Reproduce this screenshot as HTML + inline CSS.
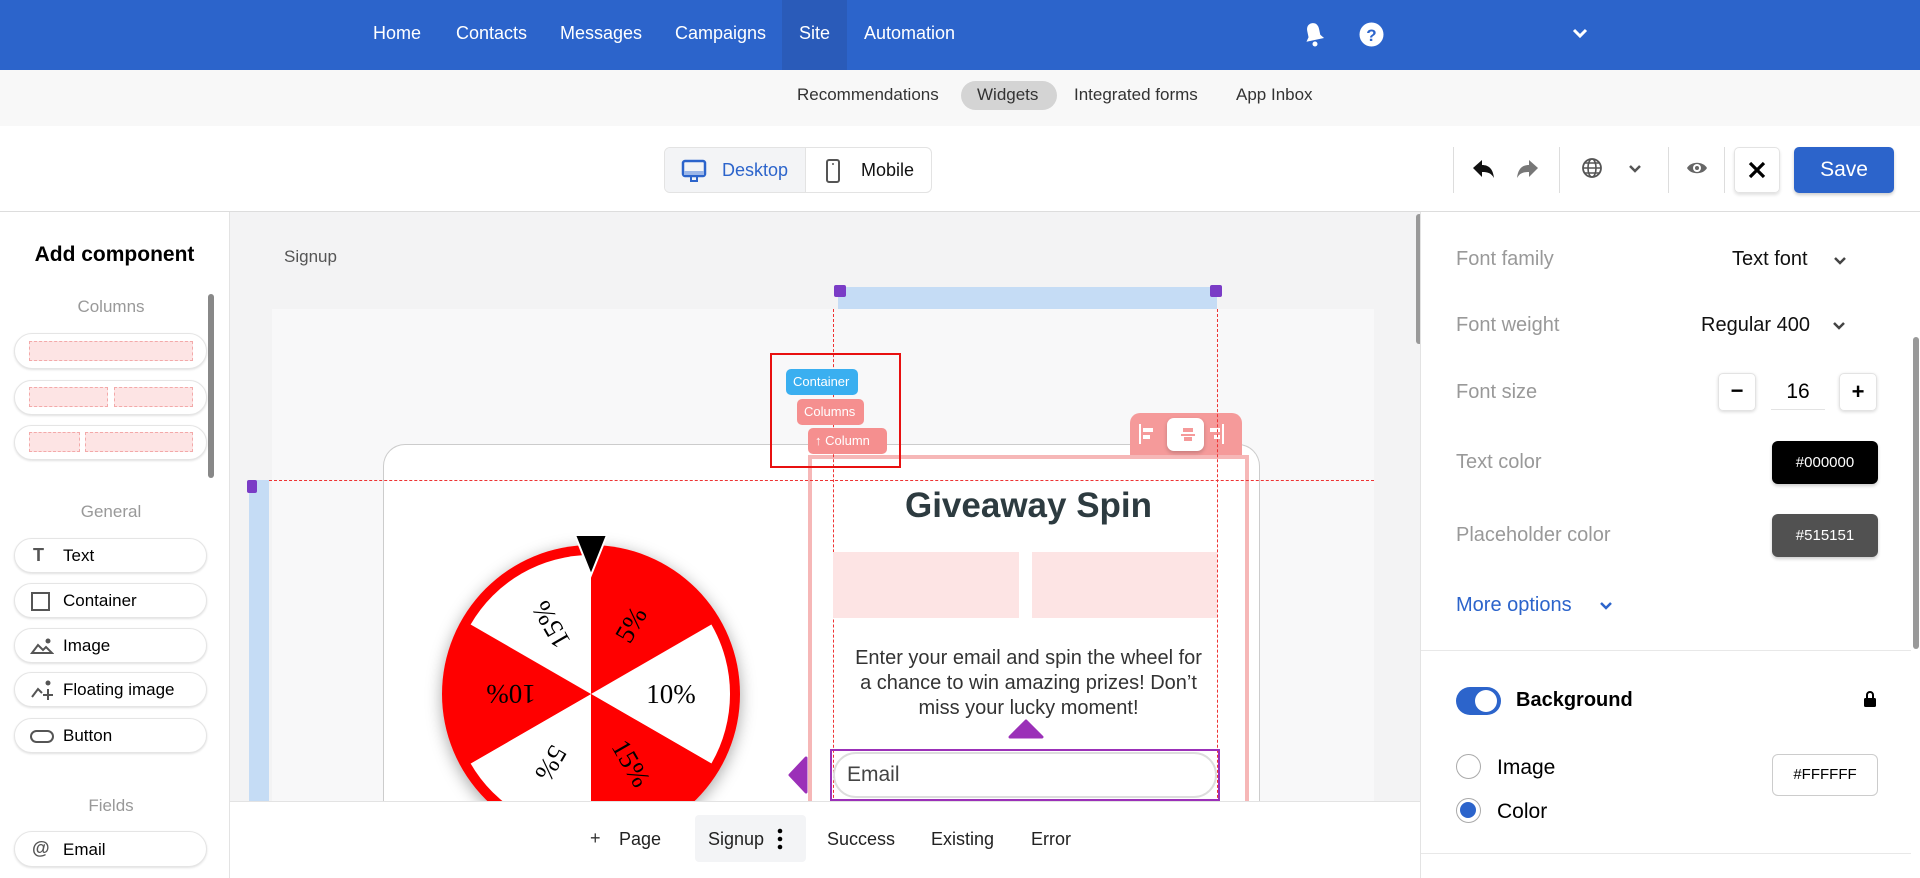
<!DOCTYPE html>
<html style="overflow:hidden;width:1920px;height:878px"><head><meta charset="utf-8"><style>
*{box-sizing:border-box;margin:0;padding:0}
body{width:1920px;height:878px;overflow:hidden;font-family:"Liberation Sans",Arial,sans-serif;background:#fff;position:relative}
.a{position:absolute}
.nav{left:0;top:0;width:1920px;height:70px;background:#2c64cb}
.nav span{position:absolute;top:23px;color:#fff;font-size:18px}
.sub{left:0;top:70px;width:1920px;height:56px;background:#f8f8f8}
.sub span{position:absolute;top:15px;font-size:17px;color:#333}
.pill{border:1px solid #e5e5e5;border-radius:20px;background:#fff;box-shadow:0 1px 2px rgba(0,0,0,.12)}
.lbl{color:#999;font-size:17px}
.rl{position:absolute;left:1456px;color:#999;font-size:20px}
.tag{position:absolute;color:#fff;font-size:13px;border-radius:5px;line-height:26px;padding-left:7px}
</style></head><body>
<div class="a nav">
<div class="a" style="left:782px;top:0;width:65px;height:70px;background:#2a5bb9"></div>
<span style="left:373px">Home</span><span style="left:456px">Contacts</span><span style="left:560px">Messages</span><span style="left:675px">Campaigns</span><span style="left:799px">Site</span><span style="left:864px">Automation</span>
<svg class="a" style="left:1302px;top:21px" width="24" height="26" viewBox="0 0 24 26"><path d="M12 2c-4 0-6 3-6 7v6l-3 4h18l-3-4V9c0-4-2-7-6-7z" fill="#fff" transform="rotate(-12 12 13)"/><circle cx="13" cy="23" r="2.5" fill="#fff"/></svg>
<svg class="a" style="left:1359px;top:22px" width="25" height="25"><circle cx="12.5" cy="12.5" r="12" fill="#fff"/><text x="12.5" y="19" text-anchor="middle" font-size="17" font-weight="bold" fill="#2c64cb" font-family="Liberation Sans">?</text></svg>
<svg class="a" style="left:1572px;top:28px" width="16" height="12"><path d="M2 2l6 6 6-6" stroke="#fff" stroke-width="3" fill="none"/></svg>
</div>
<div class="a sub">
<div class="a" style="left:961px;top:11px;width:96px;height:29px;background:#d4d4d4;border-radius:15px"></div>
<span style="left:797px">Recommendations</span><span style="left:977px">Widgets</span><span style="left:1074px">Integrated forms</span><span style="left:1236px">App Inbox</span>
</div>
<div class="a" style="left:664px;top:147px;width:268px;height:46px;border:1px solid #e3e3e3;border-radius:6px;background:#fff;overflow:hidden">
<div class="a" style="left:0;top:0;width:141px;height:46px;background:#f3f4f6;border-right:1px solid #e3e3e3"></div>
<svg class="a" style="left:16px;top:11px" width="26" height="24"><rect x="2" y="2" width="22" height="15" rx="2" fill="none" stroke="#2c64cb" stroke-width="2.5"/><rect x="3" y="12" width="20" height="4" fill="#9bb6e8"/><path d="M10 18v4h6v-4" fill="none" stroke="#2c64cb" stroke-width="2"/></svg>
<span class="a" style="left:57px;top:12px;font-size:18px;color:#2c64cb">Desktop</span>
<svg class="a" style="left:160px;top:10px" width="16" height="26"><rect x="2" y="2" width="12" height="22" rx="2" fill="none" stroke="#555" stroke-width="2"/><circle cx="8" cy="6" r="1" fill="#555"/></svg>
<span class="a" style="left:196px;top:12px;font-size:18px;color:#111">Mobile</span>
</div>
<div class="a" style="left:1453px;top:147px;width:1px;height:46px;background:#ddd"></div>
<div class="a" style="left:1559px;top:147px;width:1px;height:46px;background:#ddd"></div>
<div class="a" style="left:1668px;top:147px;width:1px;height:46px;background:#ddd"></div>
<div class="a" style="left:1724px;top:147px;width:1px;height:46px;background:#ddd"></div>
<svg class="a" style="left:1470px;top:157px" width="26" height="24"><path d="M3 11l9-8v5c7 0 11 4 12 13-3-5-6-6-12-6v5z" fill="#111"/></svg>
<svg class="a" style="left:1515px;top:157px" width="26" height="24"><path d="M23 11l-9-8v5C7 8 3 12 2 21c3-5 6-6 12-6v5z" fill="#777"/></svg>
<svg class="a" style="left:1581px;top:157px" width="22" height="22"><circle cx="11" cy="11" r="9" fill="none" stroke="#555" stroke-width="1.8"/><ellipse cx="11" cy="11" rx="4" ry="9" fill="none" stroke="#555" stroke-width="1.6"/><path d="M2 11h18M4 6h14M4 16h14" stroke="#555" stroke-width="1.4"/></svg>
<svg class="a" style="left:1628px;top:164px" width="14" height="10"><path d="M2 2l5 5 5-5" stroke="#555" stroke-width="2.5" fill="none"/></svg>
<svg class="a" style="left:1686px;top:160px" width="22" height="16"><path d="M1 8c4-7 16-7 20 0-4 7-16 7-20 0z" fill="#666"/><circle cx="11" cy="8" r="4" fill="#fff"/><circle cx="11" cy="8" r="2" fill="#666"/></svg>
<div class="a" style="left:1734px;top:147px;width:46px;height:46px;border:1px solid #e3e3e3;border-radius:5px;box-shadow:0 2px 3px rgba(0,0,0,.12)"></div>
<svg class="a" style="left:1748px;top:161px" width="18" height="18"><path d="M2 2l14 14M16 2L2 16" stroke="#000" stroke-width="3.2"/></svg>
<div class="a" style="left:1794px;top:147px;width:100px;height:46px;background:#2c64cb;border-radius:5px;color:#fff;font-size:21px;text-align:center;line-height:46px;box-shadow:0 2px 3px rgba(0,0,0,.2)">Save</div>
<div class="a" style="left:0;top:211px;width:1920px;height:1px;background:#ddd"></div>
<div class="a" style="left:229px;top:212px;width:1px;height:666px;background:#e3e3e3"></div>
<div class="a" style="left:0;top:243px;width:229px;text-align:center;font-size:21px;font-weight:bold">Add component</div>
<div class="a lbl" style="left:0;top:297px;width:222px;text-align:center">Columns</div>
<div class="a" style="left:208px;top:294px;width:6px;height:184px;background:#888;border-radius:3px"></div>
<div class="a pill" style="left:14px;top:333px;width:193px;height:36px"><div class="a" style="left:14px;top:7px;width:164px;height:20px;background:#fde4e4;border:1px dashed #f3a9a9"></div></div>
<div class="a pill" style="left:14px;top:380px;width:193px;height:35px"><div class="a" style="left:14px;top:6px;width:79px;height:20px;background:#fde4e4;border:1px dashed #f3a9a9"></div><div class="a" style="left:99px;top:6px;width:79px;height:20px;background:#fde4e4;border:1px dashed #f3a9a9"></div></div>
<div class="a pill" style="left:14px;top:425px;width:193px;height:35px"><div class="a" style="left:14px;top:6px;width:51px;height:20px;background:#fde4e4;border:1px dashed #f3a9a9"></div><div class="a" style="left:70px;top:6px;width:108px;height:20px;background:#fde4e4;border:1px dashed #f3a9a9"></div></div>
<div class="a lbl" style="left:0;top:502px;width:222px;text-align:center">General</div>
<div class="a pill" style="left:14px;top:538px;width:193px;height:35px"><span class="a" style="left:18px;top:6px;font-size:18px;font-weight:bold;color:#555">T</span><span class="a" style="left:48px;top:7px;font-size:17px">Text</span></div>
<div class="a pill" style="left:14px;top:583px;width:193px;height:35px"><div class="a" style="left:16px;top:8px;width:19px;height:19px;border:2px solid #555"></div><span class="a" style="left:48px;top:7px;font-size:17px">Container</span></div>
<div class="a pill" style="left:14px;top:628px;width:193px;height:35px"><svg class="a" style="left:15px;top:8px" width="24" height="18"><path d="M2 16l6-8 5 5 3-3 6 6z" fill="none" stroke="#555" stroke-width="2"/><circle cx="18" cy="4" r="2.5" fill="#555"/></svg><span class="a" style="left:48px;top:7px;font-size:17px">Image</span></div>
<div class="a pill" style="left:14px;top:672px;width:193px;height:35px"><svg class="a" style="left:15px;top:6px" width="26" height="22"><path d="M2 18l6-8 4 4" fill="none" stroke="#555" stroke-width="2"/><circle cx="18" cy="4" r="2.5" fill="#555"/><path d="M18 10v11M13 16h10" stroke="#555" stroke-width="2"/></svg><span class="a" style="left:48px;top:7px;font-size:17px">Floating image</span></div>
<div class="a pill" style="left:14px;top:718px;width:193px;height:35px"><div class="a" style="left:15px;top:11px;width:24px;height:13px;border:2px solid #555;border-radius:7px"></div><span class="a" style="left:48px;top:7px;font-size:17px">Button</span></div>
<div class="a lbl" style="left:0;top:796px;width:222px;text-align:center">Fields</div>
<div class="a pill" style="left:14px;top:831px;width:193px;height:36px"><span class="a" style="left:17px;top:6px;font-size:18px;font-weight:bold;color:#555">@</span><span class="a" style="left:48px;top:8px;font-size:17px">Email</span></div>
<div class="a" style="left:230px;top:212px;width:1190px;height:666px;background:#f3f3f4;overflow:hidden">
<span class="a" style="left:54px;top:35px;font-size:17px;color:#555">Signup</span>
<div class="a" style="left:42px;top:97px;width:1102px;height:569px;background:#f8f8f9"></div>
<div class="a" style="left:153px;top:232px;width:877px;height:434px;background:#fff;border:1px solid #ccc;border-bottom:none;border-radius:22px 22px 0 0"></div>
<svg class="a" style="left:0;top:0" width="1190" height="666">
<defs><filter id="sh" x="-20%" y="-20%" width="140%" height="140%"><feDropShadow dx="0" dy="4" stdDeviation="8" flood-opacity=".35"/></filter></defs>
<g transform="translate(361,482)">
<circle r="149" fill="#f00" filter="url(#sh)"/>
<g><path d="M0 0L0-139A139 139 0 0 1 120.4-69.5Z" fill="#f00"/></g>
<g transform="rotate(60)"><path d="M0 0L0-139A139 139 0 0 1 120.4-69.5Z" fill="#fff"/></g>
<g transform="rotate(120)"><path d="M0 0L0-139A139 139 0 0 1 120.4-69.5Z" fill="#f00"/></g>
<g transform="rotate(180)"><path d="M0 0L0-139A139 139 0 0 1 120.4-69.5Z" fill="#fff"/></g>
<g transform="rotate(240)"><path d="M0 0L0-139A139 139 0 0 1 120.4-69.5Z" fill="#f00"/></g>
<g transform="rotate(300)"><path d="M0 0L0-139A139 139 0 0 1 120.4-69.5Z" fill="#fff"/></g>
<g font-family="Liberation Serif,serif" font-size="27" fill="#000" text-anchor="middle">
<g transform="rotate(30)"><text transform="translate(0,-80) rotate(-90)" y="9">5%</text></g>
<g transform="rotate(90)"><text transform="translate(0,-80) rotate(-90)" y="9">10%</text></g>
<g transform="rotate(150)"><text transform="translate(0,-80) rotate(-90)" y="9">15%</text></g>
<g transform="rotate(210)"><text transform="translate(0,-80) rotate(-90)" y="9">5%</text></g>
<g transform="rotate(270)"><text transform="translate(0,-80) rotate(-90)" y="9">10%</text></g>
<g transform="rotate(330)"><text transform="translate(0,-80) rotate(-90)" y="9">15%</text></g>
</g>
<path d="M-16-159h32l-16 40z" fill="#000" stroke="#fff" stroke-width="2"/>
</g>
</svg>
<div class="a" style="left:578px;top:243px;width:441px;height:423px;border:4px solid #f6b7b7;border-bottom:none"></div>
<div class="a" style="left:900px;top:201px;width:112px;height:42px;background:#f59a9a;border-radius:10px 10px 0 0"></div>
<div class="a" style="left:937px;top:206px;width:37px;height:33px;background:#fff;border-radius:7px;box-shadow:0 2px 4px rgba(0,0,0,.2)"></div>
<svg class="a" style="left:907px;top:211px" width="100" height="24"><g fill="#fff"><rect x="2" y="1" width="2" height="20"/><rect x="6" y="5" width="10" height="4"/><rect x="6" y="12" width="7" height="4"/><rect x="85" y="1" width="2" height="20"/><rect x="73" y="5" width="10" height="4"/><rect x="77" y="12" width="6" height="4"/></g><g fill="#f59a9a"><rect x="44" y="11" width="14" height="2"/><rect x="46" y="5" width="10" height="4"/><rect x="47" y="14" width="8" height="4"/></g></svg>
<div class="a" style="left:608px;top:75px;width:379px;height:22px;background:#c5dcf5"></div>
<div class="a" style="left:604px;top:73px;width:12px;height:12px;background:#7a3cc6;border-radius:2px"></div>
<div class="a" style="left:980px;top:73px;width:12px;height:12px;background:#7a3cc6;border-radius:2px"></div>
<div class="a" style="left:19px;top:268px;width:20px;height:398px;background:#c5dcf5"></div>
<div class="a" style="left:17px;top:268px;width:10px;height:13px;background:#7a3cc6;border-radius:2px"></div>
<div class="a" style="left:603px;top:97px;width:0;height:569px;border-left:1px dashed #e33"></div>
<div class="a" style="left:987px;top:97px;width:0;height:569px;border-left:1px dashed #e33"></div>
<div class="a" style="left:39px;top:268px;width:1105px;height:0;border-top:1px dashed #e33"></div>
<div class="a" style="left:540px;top:141px;width:131px;height:115px;border:2.5px solid #e81010"></div>
<div class="tag" style="left:556px;top:157px;width:72px;background:#3aaff0">Container</div>
<div class="tag" style="left:567px;top:187px;width:67px;background:#f58f8f">Columns</div>
<div class="tag" style="left:578px;top:216px;width:79px;background:#f58f8f">↑ Column</div>
<div class="a" style="left:578px;top:274px;width:441px;text-align:center;font-size:35px;font-weight:bold;color:#2d3b40">Giveaway Spin</div>
<div class="a" style="left:603px;top:340px;width:186px;height:66px;background:#fde4e4"></div>
<div class="a" style="left:802px;top:340px;width:185px;height:66px;background:#fde4e4"></div>
<div class="a" style="left:578px;top:434px;width:441px;text-align:center;font-size:20px;line-height:25px;color:#333;white-space:nowrap">Enter your email and spin the wheel for<br>a chance to win amazing prizes! Don’t<br>miss your lucky moment!</div>
<svg class="a" style="left:778px;top:507px" width="36" height="20"><path d="M2 18L18 2 34 18z" fill="#9b30b8" stroke="#9b30b8" stroke-linejoin="round" stroke-width="3"/></svg>
<div class="a" style="left:600px;top:537px;width:390px;height:52px;border:2px solid #9b30b8"></div>
<div class="a" style="left:603px;top:540px;width:384px;height:46px;border:2px solid #ddd;border-radius:23px;background:#fff"></div>
<span class="a" style="left:617px;top:551px;font-size:21px;color:#444">Email</span>
<svg class="a" style="left:558px;top:544px" width="20" height="38"><path d="M18 2L2 19 18 36z" fill="#9b30b8" stroke="#9b30b8" stroke-linejoin="round" stroke-width="3"/></svg>
<div class="a" style="left:1186px;top:2px;width:6px;height:130px;background:#999;border-radius:3px"></div>
</div>
<div class="a" style="left:230px;top:801px;width:1190px;height:77px;background:#fff;border-top:1px solid #e3e3e3"></div>
<span class="a" style="left:590px;top:828px;font-size:18px;color:#333">+</span>
<span class="a" style="left:619px;top:829px;font-size:18px;color:#222">Page</span>
<div class="a" style="left:695px;top:815px;width:111px;height:47px;background:#f3f4f6;border-radius:4px"></div>
<span class="a" style="left:708px;top:829px;font-size:18px;color:#222">Signup</span>
<svg class="a" style="left:777px;top:828px" width="6" height="22"><circle cx="3" cy="3" r="2.3"/><circle cx="3" cy="11" r="2.3"/><circle cx="3" cy="19" r="2.3"/></svg>
<span class="a" style="left:827px;top:829px;font-size:18px;color:#222">Success</span>
<span class="a" style="left:931px;top:829px;font-size:18px;color:#222">Existing</span>
<span class="a" style="left:1031px;top:829px;font-size:18px;color:#222">Error</span>
<div class="a" style="left:1420px;top:212px;width:1px;height:666px;background:#e3e3e3"></div>
<div class="a" style="left:1913px;top:337px;width:6px;height:312px;background:#999;border-radius:3px"></div>
<span class="rl" style="top:248px">Font family</span>
<span class="a" style="left:1732px;top:248px;font-size:20px;color:#111">Text font</span>
<svg class="a" style="left:1833px;top:256px" width="14" height="10"><path d="M2 2l5 5 5-5" stroke="#444" stroke-width="2.5" fill="none"/></svg>
<span class="rl" style="top:314px">Font weight</span>
<span class="a" style="left:1701px;top:314px;font-size:20px;color:#111">Regular 400</span>
<svg class="a" style="left:1832px;top:321px" width="14" height="10"><path d="M2 2l5 5 5-5" stroke="#444" stroke-width="2.5" fill="none"/></svg>
<span class="rl" style="top:381px">Font size</span>
<div class="a" style="left:1718px;top:373px;width:38px;height:38px;border:1px solid #e3e3e3;border-radius:5px;box-shadow:0 1px 3px rgba(0,0,0,.15);text-align:center;font-size:22px;font-weight:bold;line-height:34px">−</div>
<div class="a" style="left:1771px;top:376px;width:54px;height:34px;border-bottom:1px solid #e3e3e3;text-align:center;font-size:21px;line-height:32px">16</div>
<div class="a" style="left:1839px;top:373px;width:38px;height:38px;border:1px solid #e3e3e3;border-radius:5px;box-shadow:0 1px 3px rgba(0,0,0,.15);text-align:center;font-size:22px;font-weight:bold;line-height:36px">+</div>
<span class="rl" style="top:451px">Text color</span>
<div class="a" style="left:1772px;top:441px;width:106px;height:43px;background:#000;border-radius:6px;color:#fff;font-size:15px;text-align:center;line-height:43px;box-shadow:0 2px 3px rgba(0,0,0,.2)">#000000</div>
<span class="rl" style="top:524px">Placeholder color</span>
<div class="a" style="left:1772px;top:514px;width:106px;height:43px;background:#515151;border-radius:6px;color:#fff;font-size:15px;text-align:center;line-height:43px;box-shadow:0 2px 3px rgba(0,0,0,.2)">#515151</div>
<span class="rl" style="top:594px;color:#2c64cb">More options</span>
<svg class="a" style="left:1599px;top:601px" width="14" height="10"><path d="M2 2l5 5 5-5" stroke="#2c64cb" stroke-width="2.5" fill="none"/></svg>
<div class="a" style="left:1421px;top:650px;width:490px;height:1px;background:#e8e8e8"></div>
<div class="a" style="left:1456px;top:687px;width:45px;height:28px;background:#2c64cb;border-radius:14px"><div class="a" style="left:19px;top:3px;width:22px;height:22px;background:#fff;border-radius:11px"></div></div>
<span class="a" style="left:1516px;top:689px;font-size:20px;font-weight:bold">Background</span>
<svg class="a" style="left:1863px;top:690px" width="14" height="18"><path d="M4 8V5a3 3 0 016 0v3" stroke="#000" stroke-width="2" fill="none"/><rect x="1" y="8" width="12" height="9" rx="1.5"/></svg>
<div class="a" style="left:1456px;top:754px;width:25px;height:25px;border:1.5px solid #aaa;border-radius:50%"></div>
<span class="a" style="left:1497px;top:756px;font-size:21px">Image</span>
<div class="a" style="left:1456px;top:798px;width:25px;height:25px;border:1.5px solid #aaa;border-radius:50%"><div class="a" style="left:3px;top:3px;width:16px;height:16px;background:#2c64cb;border-radius:50%"></div></div>
<span class="a" style="left:1497px;top:800px;font-size:21px">Color</span>
<div class="a" style="left:1772px;top:754px;width:106px;height:42px;border:1px solid #ccc;border-radius:6px;font-size:15px;text-align:center;line-height:40px">#FFFFFF</div>
<div class="a" style="left:1421px;top:853px;width:490px;height:1px;background:#e8e8e8"></div>
</body></html>
